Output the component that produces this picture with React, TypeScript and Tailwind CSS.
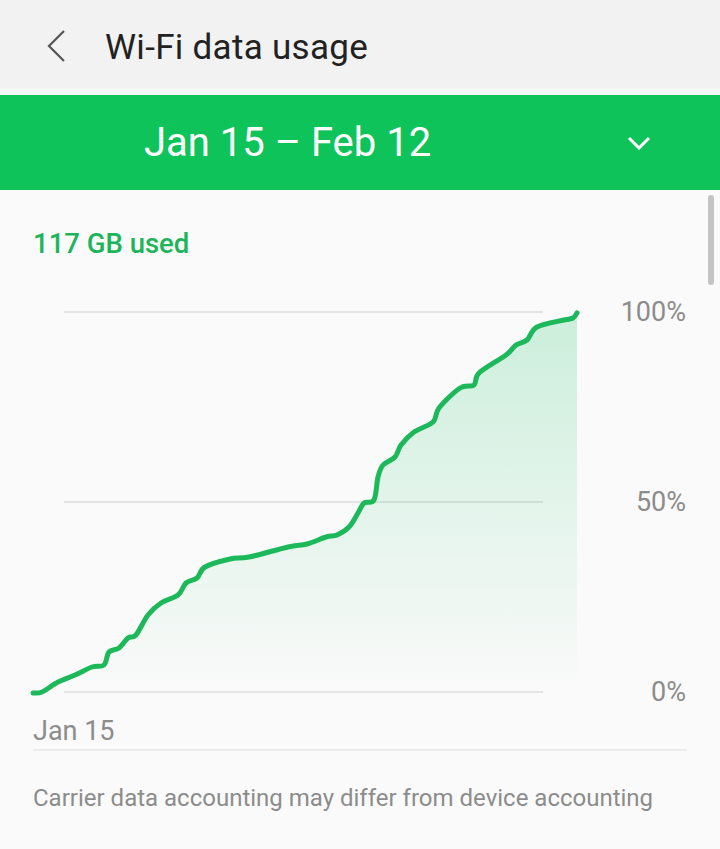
const pts: [number, number][] = [
  [33, 693], [42, 692], [58, 682], [75, 675], [92, 667], [104, 665], [109, 652], [119, 648],
  [128, 638], [136, 635], [148, 615], [161, 603], [178, 595], [186, 583], [197, 578],
  [205, 567], [230, 559], [249, 557], [288, 547], [307, 544], [326, 537], [337, 535],
  [349, 527], [358, 513], [364, 503], [374, 500], [378, 477], [383, 465], [395, 457],
  [401, 445], [414, 432], [433, 422], [439, 408], [460, 388], [474, 385], [479, 373],
  [506, 355], [516, 345], [527, 340], [537, 327], [564, 320], [573, 318], [577, 313],
]

// smooth path through the points (catmull-rom -> bezier)
function smooth(p: [number, number][]) {
  let d = `M${p[0][0]},${p[0][1]}`
  for (let i = 0; i < p.length - 1; i++) {
    const p0 = p[i - 1] || p[i]
    const p1 = p[i]
    const p2 = p[i + 1]
    const p3 = p[i + 2] || p2
    const c1x = p1[0] + (p2[0] - p0[0]) / 6
    const c1y = p1[1] + (p2[1] - p0[1]) / 6
    const c2x = p2[0] - (p3[0] - p1[0]) / 6
    const c2y = p2[1] - (p3[1] - p1[1]) / 6
    d += ` C${c1x.toFixed(1)},${c1y.toFixed(1)} ${c2x.toFixed(1)},${c2y.toFixed(1)} ${p2[0]},${p2[1]}`
  }
  return d
}

const line = smooth(pts)
const area = `${line} L577,693 L33,693 Z`

function Row({ label, first }: { label: string; first?: boolean }) {
  return (
    <div className={`flex items-center h-[24px] pl-[64px] pr-[34px] ${first ? '' : 'mt-[166px]'}`}>
      <div className="w-[479px] h-[2px] bg-[#e4e4e4]" />
      <span className="flex-1 text-right text-[27px] leading-[24px] text-[#8c8c8c]">{label}</span>
    </div>
  )
}

export default function App() {
  return (
    <div className="w-[720px] h-[849px] bg-[#fafafa] relative overflow-hidden" style={{ fontFamily: 'Roboto, "Noto Sans", sans-serif' }}>
      {/* header */}
      <header className="h-[88px] bg-[#f2f2f2] flex items-center">
        <svg className="ml-[44px] mt-[4px]" width="24" height="34" viewBox="0 0 24 34">
          <path d="M20 2 L5 17 L20 32" fill="none" stroke="#555" strokeWidth="2.2" />
        </svg>
        <h1 className="ml-[37px] mt-[6px] text-[35px] leading-none text-[#222] tracking-[0.3px]">Wi-Fi data usage</h1>
      </header>
      <div className="h-[7px] bg-[#f3f8f6]" />

      {/* date range */}
      <div className="h-[95px] bg-[#0fc35b] flex items-center">
        <span className="ml-[144px] text-[40px] leading-none text-white">Jan 15 – Feb 12</span>
        <svg className="ml-auto mr-[69px]" width="24" height="14" viewBox="0 0 24 14">
          <path d="M2 2 L12 12 L22 2" fill="none" stroke="#fff" strokeWidth="3" />
        </svg>
      </div>

      {/* content */}
      <div className="pt-[38px]">
        <div className="px-[33px] text-[27.5px] leading-[32px] font-medium text-[#1db55c]">117 GB used</div>

        <div className="relative h-[445px] pt-[40px]">
          <Row label="100%" first />
          <Row label="50%" />
          <Row label="0%" />
          <svg className="absolute inset-0" width="720" height="445" viewBox="0 260 720 445">
            <defs>
              <linearGradient id="fill" x1="0" y1="313" x2="0" y2="693" gradientUnits="userSpaceOnUse">
                <stop offset="0" stopColor="#13c060" stopOpacity="0.2" />
                <stop offset="0.5" stopColor="#13c060" stopOpacity="0.1" />
                <stop offset="1" stopColor="#13c060" stopOpacity="0" />
              </linearGradient>
            </defs>
            <path d={area} fill="url(#fill)" />
            <path d={line} fill="none" stroke="#1cb85a" strokeWidth="5" strokeLinecap="round" strokeLinejoin="round" />
          </svg>
        </div>

        <div className="mx-[33px] mt-[12px] pb-[4px] border-b-2 border-[#ececec] text-[27px] leading-[28px] text-[#8c8c8c]">Jan 15</div>
        <p className="mx-[33px] mt-[32px] text-[24px] leading-[30px] text-[#8c8c8c]">
          Carrier data accounting may differ from device accounting
        </p>
      </div>

      {/* scrollbar */}
      <div className="absolute right-[6px] top-[195px] w-[6px] h-[90px] rounded-full bg-[#c4c4c4]" />
    </div>
  )
}
